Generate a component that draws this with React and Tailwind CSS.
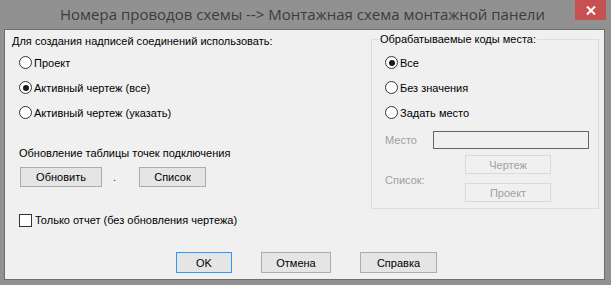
import React, { useState } from "react";

function Radio({ checked, label, onClick }) {
  return (
    <button
      type="button"
      onClick={onClick}
      className="flex h-[15px] items-center gap-[2px] text-left"
    >
      <span className="flex h-[13px] w-[13px] shrink-0 items-center justify-center rounded-full border border-[#333333] bg-white">
        {checked && <span className="h-[6px] w-[6px] rounded-full bg-[#1a1a1a]" />}
      </span>
      <span>{label}</span>
    </button>
  );
}

function Btn({ children, className = "", disabled, primary }) {
  return (
    <button
      type="button"
      className={`flex items-center justify-center border ${
        primary
          ? "border-[#3399ff] bg-[#e5e5e5]"
          : disabled
          ? "border-[#d9d9d9] bg-[#f0f0f0] text-[#a0a0a0]"
          : "border-[#acacac] bg-[#e5e5e5]"
      } ${className}`}
    >
      {children}
    </button>
  );
}

export default function App() {
  const [source, setSource] = useState("all");
  const [codes, setCodes] = useState("all");
  const [reportOnly, setReportOnly] = useState(false);

  return (
    <div className="flex h-[285px] w-[611px] flex-col bg-[#919191] font-['Liberation_Sans',Arial,sans-serif] text-[11px] leading-[14px] text-black">
      {/* TITLE BAR */}
      <div className="flex h-[29px] shrink-0 items-start">
        <div className="flex h-[29px] flex-1 items-center justify-center pb-[1px] pl-[30px] font-['Open_Sans',sans-serif] text-[15px] text-[#3c3c3c]">
          Номера проводов схемы --&gt; Монтажная схема монтажной панели
        </div>
        <div className="mr-[5px] flex h-[20px] w-[31px] items-center justify-center bg-[#c75050]">
          <svg width="10" height="9" viewBox="0 0 10 9">
            <path d="M1 0.5 L9 8.5 M9 0.5 L1 8.5" stroke="white" strokeWidth="2" />
          </svg>
        </div>
      </div>

      {/* CLIENT */}
      <div className="ml-[4px] mr-[6px] flex h-[251px] flex-col border border-[#6e6e6e] bg-[#f0f0f0]">
        <div className="flex">
          {/* LEFT */}
          <div className="flex w-[366px] flex-col pl-[7px] pt-[4px]">
            <div className="h-[14px]">Для создания надписей соединений использовать:</div>
            <div className="ml-[7px] mt-[7px] flex flex-col gap-[10px]">
              <Radio label="Проект" checked={source === "project"} onClick={() => setSource("project")} />
              <Radio label="Активный чертеж (все)" checked={source === "all"} onClick={() => setSource("all")} />
              <Radio label="Активный чертеж (указать)" checked={source === "pick"} onClick={() => setSource("pick")} />
            </div>
            <div className="ml-[7px] mt-[26px] h-[14px]">Обновление таблицы точек подключения</div>
            <div className="ml-[8px] mt-[7px] flex items-center">
              <Btn className="h-[20px] w-[82px]">Обновить</Btn>
              <span className="ml-[11px] w-[26px] text-[#333]">.</span>
              <Btn className="h-[20px] w-[67px]">Список</Btn>
            </div>
            <button
              type="button"
              onClick={() => setReportOnly(!reportOnly)}
              className="ml-[7px] mt-[26px] flex h-[14px] items-center gap-[3px] text-left"
            >
              <span className="flex h-[13px] w-[13px] items-center justify-center border border-[#333333] bg-white text-[10px]">
                {reportOnly ? "✓" : ""}
              </span>
              Только отчет (без обновления чертежа)
            </button>
          </div>

          {/* RIGHT GROUP */}
          <fieldset className="mt-[2px] h-[177px] w-[228px] border border-[#dcdcdc] pl-[13px]">
            <legend className="ml-[-6px] px-[1px]">Обрабатываемые коды места:</legend>
            <div className="mt-[9px] flex flex-col gap-[10px]">
              <Radio label="Все" checked={codes === "all"} onClick={() => setCodes("all")} />
              <Radio label="Без значения" checked={codes === "none"} onClick={() => setCodes("none")} />
              <Radio label="Задать место" checked={codes === "set"} onClick={() => setCodes("set")} />
            </div>
            <div className="mt-[11px] flex items-center">
              <span className="w-[48px] text-[#a0a0a0]">Место</span>
              <div className="h-[18px] w-[156px] border border-[#646464] bg-[#f0f0f0]" />
            </div>
            <div className="mt-[6px] flex items-center">
              <span className="w-[80px] pt-[2px] text-[#a0a0a0]">Список:</span>
              <div className="flex flex-col gap-[9px]">
                <Btn disabled className="h-[19px] w-[86px]">Чертеж</Btn>
                <Btn disabled className="h-[19px] w-[86px]">Проект</Btn>
              </div>
            </div>
          </fieldset>
        </div>

        {/* BOTTOM BUTTONS */}
        <div className="mt-auto mb-[6px] flex pl-[171px]">
          <Btn primary className="h-[21px] w-[56px]">OK</Btn>
          <Btn className="ml-[29px] h-[21px] w-[70px]">Отмена</Btn>
          <Btn className="ml-[29px] h-[21px] w-[77px]">Справка</Btn>
        </div>
      </div>
    </div>
  );
}
